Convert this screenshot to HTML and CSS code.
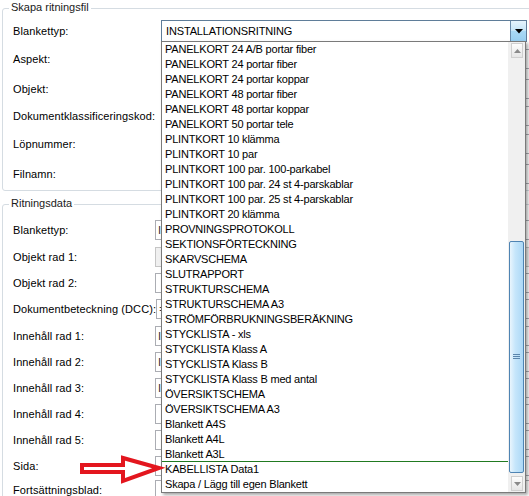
FILE: index.html
```html
<!DOCTYPE html>
<html>
<head>
<meta charset="utf-8">
<link rel="stylesheet" href="styles.css">
</head>
<body>
<div class="form">
  <div class="group g1">
    <span class="legend">Skapa ritningsfil</span>
    <div class="row h22"><span class="lbl">Blankettyp:</span>
      <div class="combo"><span class="combo-text">INSTALLATIONSRITNING</span><span class="combo-btn"><svg width="8" height="5" viewBox="0 0 8 5"><path d="M0 0H8L4 4.5Z" fill="#000"/></svg></span></div>
    </div>
    <div class="row h34"><span class="lbl">Aspekt:</span><span class="field"></span></div>
    <div class="row h26"><span class="lbl">Objekt:</span><span class="field"></span></div>
    <div class="row h28"><span class="lbl">Dokumentklassificeringskod:</span><span class="field"></span></div>
    <div class="row h28"><span class="lbl">Löpnummer:</span><span class="field"></span></div>
    <div class="row h32"><span class="lbl">Filnamn:</span><span class="field"></span></div>
  </div>
  <div class="group g2">
    <span class="legend">Ritningsdata</span>
    <div class="row h26"><span class="lbl lbl2">Blankettyp:</span><span class="field f2">I</span></div>
    <div class="row h27"><span class="lbl lbl2">Objekt rad 1:</span><span class="field f2 grey"></span></div>
    <div class="row h26"><span class="lbl lbl2">Objekt rad 2:</span><span class="field f2"></span></div>
    <div class="row h26"><span class="lbl lbl2">Dokumentbeteckning (DCC):</span><span class="field f2">=</span></div>
    <div class="row h27"><span class="lbl lbl2">Innehåll rad 1:</span><span class="field f2">I</span></div>
    <div class="row h26"><span class="lbl lbl2">Innehåll rad 2:</span><span class="field f2">I</span></div>
    <div class="row h26"><span class="lbl lbl2">Innehåll rad 3:</span><span class="field f2">I</span></div>
    <div class="row h26"><span class="lbl lbl2">Innehåll rad 4:</span><span class="field f2"></span></div>
    <div class="row h26"><span class="lbl lbl2">Innehåll rad 5:</span><span class="field f2"></span></div>
    <div class="row h25"><span class="lbl lbl2">Sida:</span><span class="field f2"></span></div>
    <div class="row h24"><span class="lbl lbl2">Fortsättningsblad:</span><span class="field f2"></span></div>
  </div>
</div>

<div class="dropdown">
  <div class="items">
    <div class="item">PANELKORT 24 A/B portar fiber</div>
    <div class="item">PANELKORT 24 portar fiber</div>
    <div class="item">PANELKORT 24 portar koppar</div>
    <div class="item">PANELKORT 48 portar fiber</div>
    <div class="item">PANELKORT 48 portar koppar</div>
    <div class="item">PANELKORT 50 portar tele</div>
    <div class="item">PLINTKORT 10 klämma</div>
    <div class="item">PLINTKORT 10 par</div>
    <div class="item">PLINTKORT 100 par. 100-parkabel</div>
    <div class="item">PLINTKORT 100 par. 24 st 4-parskablar</div>
    <div class="item">PLINTKORT 100 par. 25 st 4-parskablar</div>
    <div class="item">PLINTKORT 20 klämma</div>
    <div class="item">PROVNINGSPROTOKOLL</div>
    <div class="item">SEKTIONSFÖRTECKNING</div>
    <div class="item">SKARVSCHEMA</div>
    <div class="item">SLUTRAPPORT</div>
    <div class="item">STRUKTURSCHEMA</div>
    <div class="item">STRUKTURSCHEMA A3</div>
    <div class="item">STRÖMFÖRBRUKNINGSBERÄKNING</div>
    <div class="item">STYCKLISTA - xls</div>
    <div class="item">STYCKLISTA Klass A</div>
    <div class="item">STYCKLISTA Klass B</div>
    <div class="item">STYCKLISTA Klass B med antal</div>
    <div class="item">ÖVERSIKTSCHEMA</div>
    <div class="item">ÖVERSIKTSCHEMA A3</div>
    <div class="item">Blankett A4S</div>
    <div class="item">Blankett A4L</div>
    <div class="item sep">Blankett A3L</div>
    <div class="item">KABELLISTA Data1</div>
    <div class="item">Skapa / Lägg till egen Blankett</div>
  </div>
  <div class="scrollbar">
    <div class="sb-btn"><svg width="7" height="4" viewBox="0 0 7 4"><path d="M0 4L3.5 0L7 4Z" fill="#8a8a8a"/></svg></div>
    <div class="thumb"><svg width="7" height="6" viewBox="0 0 7 6"><path d="M0 0.5H7M0 2.5H7M0 4.5H7" stroke="#5a86ad" stroke-width="1"/></svg></div>
    <div class="sb-fill"></div>
    <div class="sb-btn"><svg width="7" height="4" viewBox="0 0 7 4"><path d="M0 0L3.5 4L7 0Z" fill="#8a8a8a"/></svg></div>
  </div>
</div>

<svg class="arrow" width="90" height="40" viewBox="78 450 90 40">
  <polygon points="82,465 123,465 123,458 159,468 123,481 123,472 82,472" fill="#fff" stroke="#e3161e" stroke-width="4" stroke-linejoin="miter"/>
</svg>
</body>
</html>
```

FILE: styles.css
```css
html, body {
  margin: 0;
  padding: 0;
  width: 529px;
  height: 496px;
  overflow: hidden;
  background: #fff;
  font-family: "Liberation Sans", Arial, sans-serif;
  font-size: 11px;
  color: #000;
}

.form {
  padding: 8px 0 0 2px;
}

.group {
  position: relative;
  width: 540px;
  border: 1px solid #d5dce2;
  border-radius: 3px;
  box-sizing: border-box;
}

.g1 {
  padding-top: 11px;
}

.g2 {
  margin-top: 13px;
  padding-top: 12px;
}

.legend {
  position: absolute;
  top: -9px;
  left: 6px;
  padding: 0 2px;
  background: #fff;
  line-height: 14px;
  color: #1a1a1a;
}

.row {
  display: flex;
  align-items: center;
}

.h22 { height: 22px; }
.h24 { height: 24px; }
.h25 { height: 25px; }
.h26 { height: 26px; }
.h27 { height: 27px; }
.h28 { height: 28px; }
.h32 { height: 32px; }
.h34 { height: 34px; }

.lbl {
  flex: 0 0 148px;
  padding-left: 10px;
  letter-spacing: 0.1px;
  white-space: nowrap;
}

.lbl2 {
  flex-basis: 142px;
}

.field {
  flex: 0 0 380px;
  height: 20px;
  box-sizing: border-box;
  border: 1px solid #abadb3;
  background: #fff;
  line-height: 18px;
  padding-left: 2px;
  color: #333;
}

.field.grey {
  background: #f0f0f0;
  border-color: #c5c5c5;
}

.combo {
  flex: 0 0 366px;
  height: 22px;
  box-sizing: border-box;
  border: 1px solid #5f7d99;
  display: flex;
  align-items: stretch;
  background: #fff;
}

.combo-text {
  flex: 1;
  padding-left: 4px;
  line-height: 20px;
  letter-spacing: -0.15px;
}

.combo-btn {
  flex: 0 0 15px;
  border-left: 1px solid #6a8cab;
  background: linear-gradient(#e5f4fc, #c4e5f7 50%, #a9d9f5 51%, #98cff1);
  display: flex;
  align-items: center;
  justify-content: center;
}

.dropdown {
  position: absolute;
  left: 161px;
  top: 41px;
  width: 363px;
  height: 450px;
  border: 1px solid #7a7a7a;
  background: #fff;
  display: flex;
  box-shadow: 2px 2px 3px rgba(0, 0, 0, 0.35);
  z-index: 2;
}

.items {
  flex: 1;
  overflow: hidden;
}

.item {
  height: 15px;
  line-height: 15px;
  padding-left: 3px;
  white-space: nowrap;
  letter-spacing: -0.2px;
  box-sizing: border-box;
}

.item.sep {
  border-bottom: 1px solid #217a21;
}

.scrollbar {
  flex: 0 0 17px;
  background: #f0f0f0;
  display: flex;
  flex-direction: column;
}

.sb-btn {
  flex: 0 0 15px;
  width: 12px;
  margin: 1px 0 1px 3px;
  box-sizing: border-box;
  border: 1px solid #cfcfcf;
  background: linear-gradient(#fdfdfd, #e6e6e6);
  display: flex;
  align-items: center;
  justify-content: center;
}

.thumb {
  flex: 0 0 232px;
  margin: 182px 0 0 1px;
  width: 15px;
  box-sizing: border-box;
  border: 1px solid #4f84b3;
  border-radius: 2px;
  background: linear-gradient(to right, #e9f5fd, #c6e6fb 40%, #acd8f6);
  display: flex;
  align-items: center;
  justify-content: center;
}

.sb-fill {
  flex: 1;
}

.arrow {
  position: absolute;
  left: 78px;
  top: 450px;
  z-index: 3;
}
```
